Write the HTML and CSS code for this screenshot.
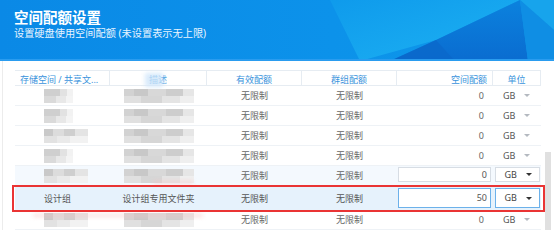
FILE: index.html
```
<!DOCTYPE html>
<html lang="zh-CN">
<head>
    <meta charset="UTF-8">
    <title>空间配额设置</title>
    <link rel="stylesheet" href="styles.css">
</head>
<body>
    <div class="banner">
        <svg class="facets" width="554" height="61" viewBox="0 0 554 61">
            <defs>
                <linearGradient id="base" x1="0" y1="0" x2="1" y2="0">
                    <stop offset="0" stop-color="#0a89e6"/>
                    <stop offset="0.6" stop-color="#0c92ea"/>
                    <stop offset="1" stop-color="#0e98e8"/>
                </linearGradient>
                <linearGradient id="cyan" x1="0" y1="0" x2="1" y2="1">
                    <stop offset="0" stop-color="#0f9cec"/>
                    <stop offset="1" stop-color="#20b6f4"/>
                </linearGradient>
                <linearGradient id="dark" x1="0" y1="0" x2="0" y2="1">
                    <stop offset="0" stop-color="#0b82de"/>
                    <stop offset="1" stop-color="#0a6cd0"/>
                </linearGradient>
            </defs>
            <rect width="554" height="61" fill="url(#base)"/>
            <polygon points="330,0 520,0 436,40 360,61" fill="url(#cyan)" opacity="0.85"/>
            <polygon points="436,40 520,0 528,61 390,61" fill="url(#dark)"/>
            <polygon points="436,40 390,61 455,61" fill="#0a66c8" opacity="0.6"/>
            <polygon points="520,0 554,0 554,30" fill="#17a4ec"/>
            <polygon points="520,0 554,30 554,61 528,61" fill="#0f8ee4"/>
            <rect y="59" width="554" height="2" fill="#2a9cef"/>
        </svg>
        <h1>空间配额设置</h1>
        <p>设置硬盘使用空间配额 (未设置表示无上限)</p>
    </div>

    <div class="frame">
        <div class="quota-table">
            <div class="row head">
                <div class="cell name">存储空间 / 共享文...</div>
                <div class="cell">描述<span class="smear"></span></div>
                <div class="cell">有效配额</div>
                <div class="cell">群组配额</div>
                <div class="cell size">空间配额</div>
                <div class="cell">单位</div>
            </div>

            <div class="row">
                <div class="cell name"><span class="mosaic short"></span></div>
                <div class="cell"><span class="mosaic long"></span></div>
                <div class="cell">无限制</div>
                <div class="cell">无限制</div>
                <div class="cell size">0</div>
                <div class="cell unit">GB<i class="arrow"></i></div>
            </div>
            <div class="row">
                <div class="cell name"><span class="mosaic short"></span></div>
                <div class="cell"><span class="mosaic long"></span></div>
                <div class="cell">无限制</div>
                <div class="cell">无限制</div>
                <div class="cell size">0</div>
                <div class="cell unit">GB<i class="arrow"></i></div>
            </div>
            <div class="row">
                <div class="cell name"><span class="mosaic mid"></span></div>
                <div class="cell"><span class="mosaic long"></span></div>
                <div class="cell">无限制</div>
                <div class="cell">无限制</div>
                <div class="cell size">0</div>
                <div class="cell unit">GB<i class="arrow"></i></div>
            </div>
            <div class="row">
                <div class="cell name"><span class="mosaic short"></span></div>
                <div class="cell"><span class="mosaic long"></span></div>
                <div class="cell">无限制</div>
                <div class="cell">无限制</div>
                <div class="cell size">0</div>
                <div class="cell unit">GB<i class="arrow"></i></div>
            </div>
            <div class="row hover">
                <div class="cell name"><span class="mosaic mid"></span></div>
                <div class="cell"><span class="mosaic long"></span></div>
                <div class="cell">无限制</div>
                <div class="cell">无限制</div>
                <div class="cell size"><div class="field">0</div></div>
                <div class="cell"><div class="select">GB<i class="arrow dark"></i></div></div>
            </div>
            <div class="row selected">
                <div class="cell name">设计组</div>
                <div class="cell">设计组专用文件夹</div>
                <div class="cell">无限制</div>
                <div class="cell">无限制</div>
                <div class="cell size"><div class="field focus">50</div></div>
                <div class="cell"><div class="select focus">GB<i class="arrow dark"></i></div></div>
            </div>
            <div class="row">
                <div class="cell name"><span class="mosaic mid"></span></div>
                <div class="cell"><span class="mosaic long"></span></div>
                <div class="cell">无限制</div>
                <div class="cell">无限制</div>
                <div class="cell size">0</div>
                <div class="cell unit">GB<i class="arrow"></i></div>
            </div>
        </div>
        <div class="scrollbar"></div>

        <div class="pink one"></div>
        <div class="pink two"></div>
        <div class="mark"></div>
    </div>
</body>
</html>
```

FILE: styles.css
```
body {
    margin: 0;
    width: 554px;
    height: 230px;
    overflow: hidden;
    background: #fff;
    font-family: "Noto Sans", "Noto Sans CJK SC", sans-serif;
}

.banner {
    position: relative;
    height: 61px;
    padding: 9px 0 0 14px;
    box-sizing: border-box;
    color: #fff;
}

.facets {
    position: absolute;
    left: 0;
    top: 0;
    z-index: -1;
}

.banner h1 {
    margin: 0;
    font-size: 14.5px;
    line-height: 17px;
    font-weight: bold;
}

.banner p {
    margin: 0;
    font-size: 10.2px;
    line-height: 15px;
    color: #e8f4ff;
}

.frame {
    position: relative;
    display: flex;
    margin: 0 0 0 2px;
    padding: 9px 0 0 12px;
    height: 169px;
    border-left: 1px solid #ececec;
}

.quota-table {
    width: 526px;
}

.row {
    display: grid;
    grid-template-columns: 95px 97px 95px 95px 96px 48px;
    height: 20px;
    border-bottom: 1px solid #eef2f6;
    box-sizing: border-box;
    font-size: 9px;
    color: #666;
}

.row.head {
    height: 16px;
    border-top: 1px solid #e6ecf2;
    border-bottom: 1px solid #e6ecf2;
    color: #3a93dc;
}

.cell {
    position: relative;
    display: flex;
    align-items: center;
    justify-content: center;
    white-space: nowrap;
}

.head .cell {
    border-right: 1px solid #e6ecf2;
    padding-top: 2px;
}

.cell.name {
    justify-content: flex-start;
    padding-left: 29px;
}

.head .cell.name {
    padding-left: 5px;
}

.cell.size {
    justify-content: flex-end;
    padding-right: 9px;
}

.head .cell.size {
    padding-right: 5px;
}

.cell.unit {
    justify-content: flex-start;
    padding-left: 10px;
    color: #555;
}

.arrow {
    display: inline-block;
    margin-left: 9px;
    border-left: 3px solid transparent;
    border-right: 3px solid transparent;
    border-top: 3px solid #b4b9c0;
}

.arrow.dark {
    border-top-color: #333;
}

.row.hover {
    background: #f4f9fe;
}

.row.selected {
    height: 24px;
    background: #e6f2fc;
    border-bottom: none;
    color: #555;
}

.row.hover .cell.size,
.row.selected .cell.size {
    padding: 0;
    justify-content: stretch;
    align-items: flex-start;
}

.field {
    box-sizing: border-box;
    width: 93px;
    height: 15px;
    margin: 1px 0 0 1px;
    padding-right: 3px;
    border: 1px solid #d7dde4;
    background: #fff;
    text-align: right;
    line-height: 13px;
    color: #555;
}

.select {
    box-sizing: border-box;
    width: 45px;
    height: 15px;
    margin-top: 1px;
    padding-left: 9px;
    border: 1px solid #d7dde4;
    background: #fff;
    display: flex;
    align-items: center;
    color: #444;
    align-self: flex-start;
}

.row.selected .cell:last-child {
    align-items: flex-start;
}

.field.focus,
.select.focus {
    height: 20px;
    margin-top: 2px;
    border-color: #6cb1ea;
    line-height: 18px;
}

.mosaic {
    display: inline-block;
    height: 14px;
    filter: blur(0.5px);
}

.mosaic.short {
    width: 29px;
    background:
        linear-gradient(90deg, #cfcfcf 0 55%, #e2e2e2 55% 80%, #f2f2f2 80%) top / 100% 7px no-repeat,
        linear-gradient(90deg, #dadada 0 40%, #e8e8e8 40% 75%, #f4f4f4 75%) bottom / 100% 7px no-repeat;
}

.mosaic.mid {
    width: 44px;
    background:
        linear-gradient(90deg, #c9c9c9 0 20%, #dcdcdc 20% 45%, #cfcfcf 45% 70%, #e4e4e4 70%) top / 100% 7px no-repeat,
        linear-gradient(90deg, #e2e2e2 0 30%, #eaeaea 30% 60%, #f2f2f2 60%) bottom / 100% 7px no-repeat;
}

.mosaic.long {
    width: 70px;
    background:
        linear-gradient(90deg, #d2d2d2 0 15%, #c8c8c8 15% 35%, #d8d8d8 35% 60%, #cdcdcd 60% 85%, #e6e6e6 85%) top / 100% 7px no-repeat,
        linear-gradient(90deg, #e0e0e0 0 25%, #d6d6d6 25% 55%, #e4e4e4 55% 80%, #efefef 80%) bottom / 100% 7px no-repeat;
}

.smear {
    position: absolute;
    left: 35px;
    top: 2px;
    width: 18px;
    height: 14px;
    background: #cfe6fa;
    filter: blur(2px);
    opacity: 0.8;
}

.scrollbar {
    align-self: flex-end;
    width: 6px;
    height: 87px;
    margin-left: 4px;
    background: #e0e0e0;
}

.mark {
    position: absolute;
    left: 9px;
    top: 124px;
    width: 529px;
    height: 23px;
    border: 2px solid #ea3434;
}

.pink {
    position: absolute;
    height: 3px;
    background: #f6c4c4;
    filter: blur(2px);
    opacity: 0.6;
}

.pink.one {
    left: 150px;
    top: 120px;
    width: 40px;
}

.pink.two {
    left: 30px;
    top: 153px;
    width: 170px;
}
```
